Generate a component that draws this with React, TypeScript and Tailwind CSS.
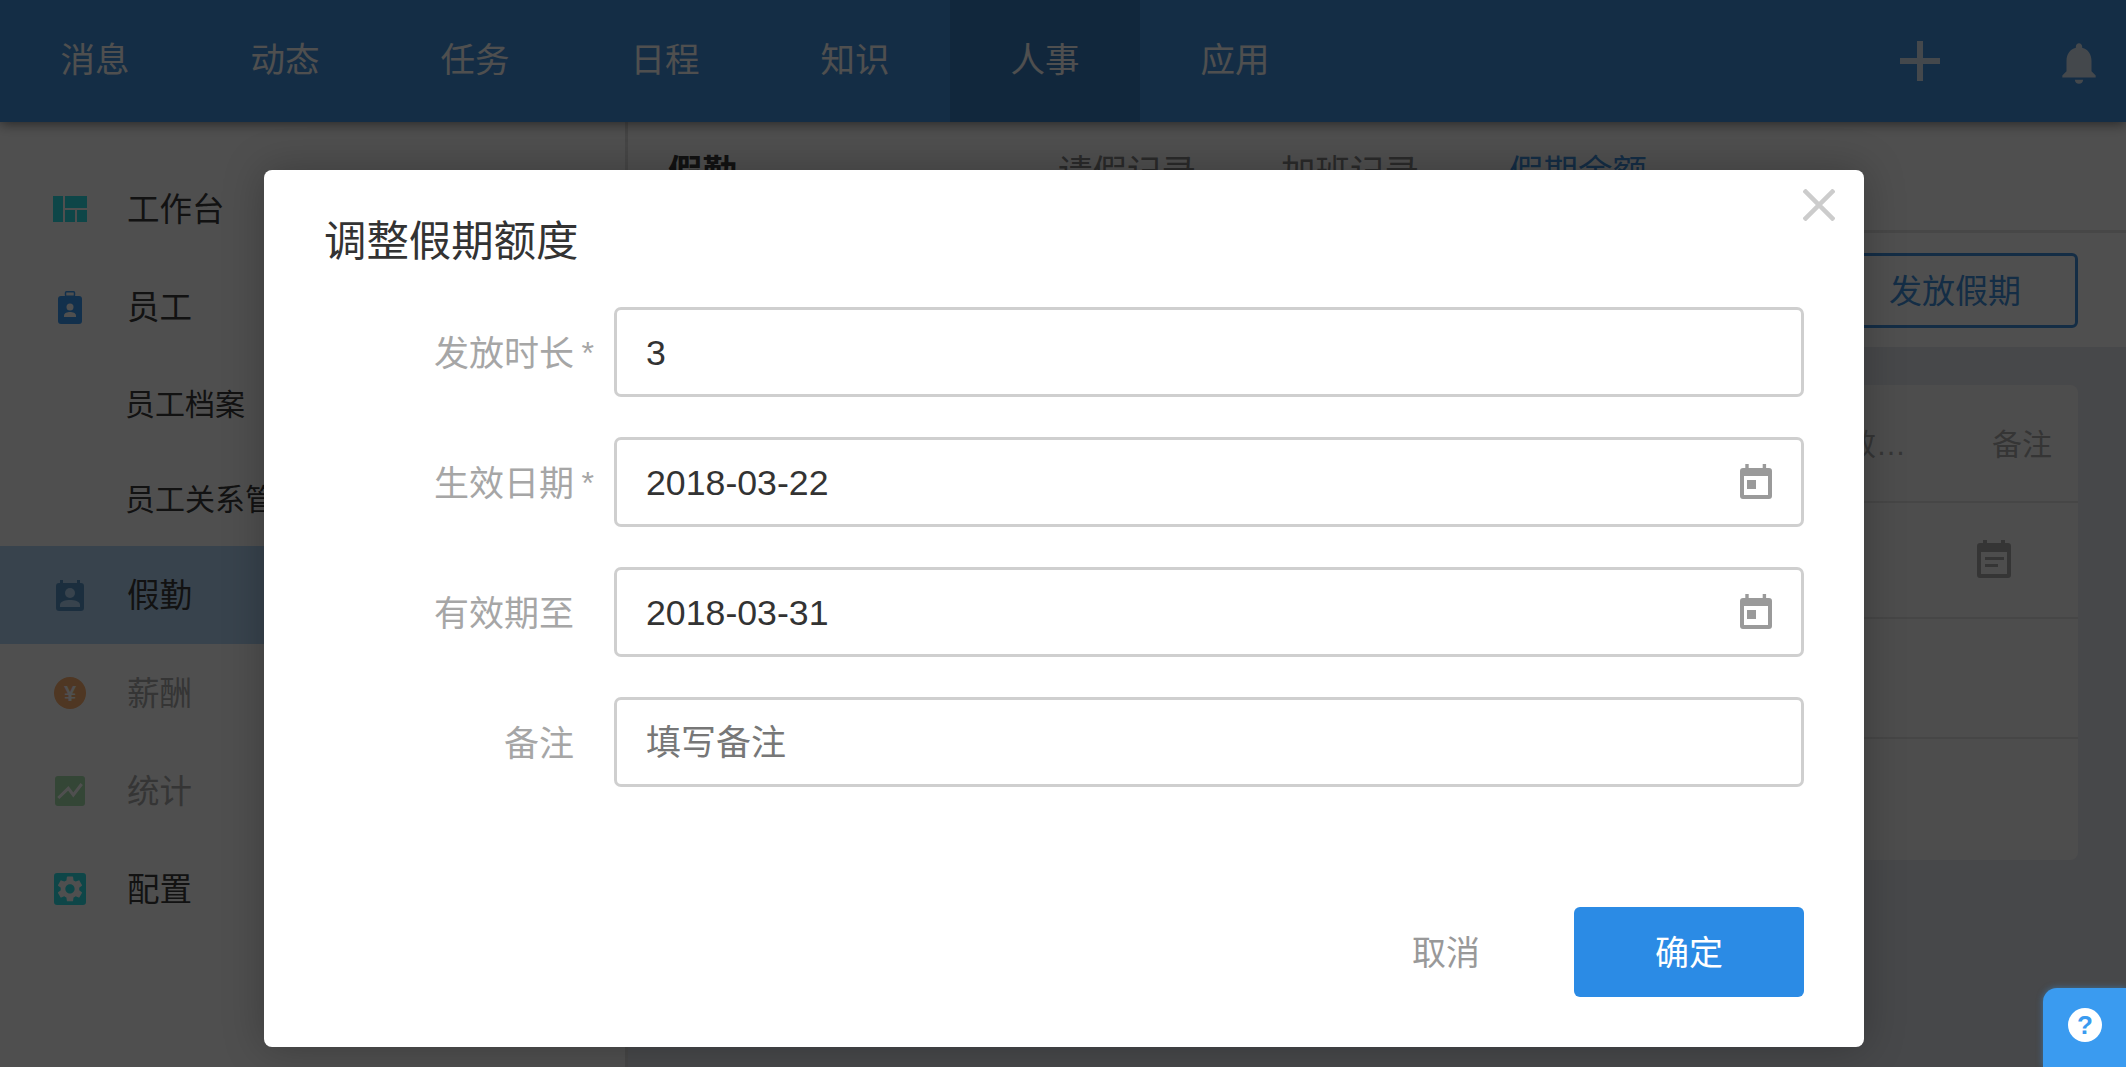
const cjk = "font-['Liberation_Sans','Noto_Sans_CJK_SC',sans-serif]";

const navItems = ["消息", "动态", "任务", "日程", "知识", "人事", "应用"];

function DashIcon() {
    return (
        <svg viewBox="0 0 34 26" className="w-[34px] h-[26px]" fill="#2ee3e8">
            <rect x="0" y="0" width="10" height="26" />
            <rect x="12" y="0" width="22" height="12" />
            <rect x="12" y="14" width="10" height="12" />
            <rect x="24" y="14" width="10" height="12" />
        </svg>
    );
}

function BadgeIcon() {
    return (
        <svg viewBox="0 0 24 33" className="w-[24px] h-[33px]">
            <rect x="7.5" y="0.8" width="9" height="4.4" rx="1" fill="none" stroke="#3b9bf5" strokeWidth="1.5" />
            <rect x="0" y="5" width="24" height="28" rx="3" fill="#3b9bf5" />
            <circle cx="12" cy="16" r="3.5" fill="#fff" />
            <path d="M6 26v-1.5c0-2.5 3.5-3.5 6-3.5s6 1 6 3.5V26z" fill="#fff" />
        </svg>
    );
}

function LeaveIcon() {
    return (
        <svg viewBox="0 0 28 31" className="w-[28px] h-[31px]">
            <rect x="4" y="0" width="3" height="6" fill="#5896c8" />
            <rect x="21" y="0" width="3" height="6" fill="#5896c8" />
            <rect x="0" y="3" width="28" height="28" rx="3" fill="#5896c8" />
            <circle cx="14" cy="13" r="5" fill="#b4d8f8" />
            <path d="M4 27v-2c0-4 6-5 10-5s10 1 10 5v2z" fill="#b4d8f8" />
        </svg>
    );
}

function SalaryIcon() {
    return (
        <div className="w-[32px] h-[32px] rounded-full bg-[#ffb070] flex items-center justify-center text-[22px] font-bold text-white font-['Liberation_Sans',sans-serif]">
            ¥
        </div>
    );
}

function StatsIcon() {
    return (
        <svg viewBox="0 0 30 30" className="w-[30px] h-[30px]">
            <rect x="0" y="0" width="30" height="30" rx="3" fill="#a8e0ae" />
            <path d="M3.3 22l10-9.700 5 6.700 8.400-11" fill="none" stroke="#fff" strokeWidth="3" />
        </svg>
    );
}

function ConfigIcon() {
    return (
        <svg viewBox="0 0 32 32" className="w-[32px] h-[32px]">
            <rect x="0" y="0" width="32" height="32" rx="3" fill="#2ee3e8" />
            <g transform="translate(0.5 0.5) scale(1.29)">
                <path
                    d="M19.14 12.94c.04-.3.06-.61.06-.94 0-.32-.02-.64-.07-.94l2.03-1.58c.18-.14.23-.41.12-.61l-1.92-3.32c-.12-.22-.37-.29-.59-.22l-2.39.96c-.5-.38-1.03-.7-1.62-.94l-.36-2.54c-.04-.24-.24-.41-.48-.41h-3.84c-.24 0-.43.17-.47.41l-.36 2.54c-.59.24-1.13.57-1.62.94l-2.39-.96c-.22-.08-.47 0-.59.22L2.74 8.87c-.12.21-.08.47.12.61l2.03 1.58c-.05.3-.09.63-.09.94s.02.64.07.94l-2.03 1.58c-.18.14-.23.41-.12.61l1.92 3.32c.12.22.37.29.59.22l2.39-.96c.5.38 1.03.7 1.62.94l.36 2.54c.05.24.24.41.48.41h3.84c.24 0 .44-.17.47-.41l.36-2.54c.59-.24 1.13-.56 1.62-.94l2.39.96c.22.08.47 0 .59-.22l1.92-3.32c.12-.22.07-.47-.12-.61l-2.01-1.58zM12 15.6c-1.98 0-3.6-1.62-3.6-3.6s1.62-3.6 3.6-3.6 3.6 1.62 3.6 3.6-1.62 3.6-3.6 3.6z"
                    fill="#fff"
                />
            </g>
        </svg>
    );
}

function CalendarIcon() {
    return (
        <svg viewBox="0 0 32 35" className="w-[32px] h-[35px] absolute right-[29px] top-[24px]">
            <rect x="5.300" y="0" width="3.400" height="6" fill="#9a9a9a" />
            <rect x="22.700" y="0" width="3.400" height="6" fill="#9a9a9a" />
            <path
                fillRule="evenodd"
                d="M3 4h26a3 3 0 0 1 3 3v25a3 3 0 0 1-3 3H3a3 3 0 0 1-3-3V7a3 3 0 0 1 3-3zM4 12v19h24V12z"
                fill="#9a9a9a"
            />
            <rect x="7" y="16" width="9" height="9" fill="#9a9a9a" />
        </svg>
    );
}

function NoteIcon() {
    return (
        <svg viewBox="0 0 34 38" className="w-[34px] h-[38px]">
            <rect x="6" y="0" width="4" height="6" fill="#aaa" />
            <rect x="24" y="0" width="4" height="6" fill="#aaa" />
            <path
                fillRule="evenodd"
                d="M3 3h28a3 3 0 0 1 3 3v29a3 3 0 0 1-3 3H3a3 3 0 0 1-3-3V6a3 3 0 0 1 3-3zM4 12v22h26V12z"
                fill="#aaa"
            />
            <rect x="8" y="17" width="19" height="3" fill="#aaa" />
            <rect x="8" y="24" width="13" height="3" fill="#aaa" />
        </svg>
    );
}

const sideItems = [
    { label: "工作台", icon: <DashIcon />, text: "text-[#3a3a3a]" },
    { label: "员工", icon: <BadgeIcon />, text: "text-[#3a3a3a]" },
    { label: "员工档案", icon: null, text: "text-[#3a3a3a]", sub: true },
    { label: "员工关系管理", icon: null, text: "text-[#3a3a3a]", sub: true },
    { label: "假勤", icon: <LeaveIcon />, text: "text-[#3a3a3a]", active: true },
    { label: "薪酬", icon: <SalaryIcon />, text: "text-[#aaa]" },
    { label: "统计", icon: <StatsIcon />, text: "text-[#aaa]" },
    { label: "配置", icon: <ConfigIcon />, text: "text-[#3a3a3a]" },
];

function Field({
    label,
    required,
    value,
    placeholder,
    date,
}: {
    label: string;
    required?: boolean;
    value?: string;
    placeholder?: string;
    date?: boolean;
}) {
    return (
        <div className="flex items-center h-[90px] mb-[40px]">
            <div className="w-[290px] pr-[40px] pt-[4px] text-right text-[35px] text-[#a6a6a6] relative">
                {label}
                {required && <span className="absolute right-[20px] top-[5px] text-[32px]">*</span>}
            </div>
            <div className="relative flex-1 h-[90px] border-[3px] border-[#cfcfcf] rounded-[7px] flex items-center pl-[29px] pt-[3px] text-[35.7px]">
                {value ? (
                    <span className="text-[#333]">{value}</span>
                ) : (
                    <span className="text-[#777] text-[35px]">{placeholder}</span>
                )}
                {date && <CalendarIcon />}
            </div>
        </div>
    );
}

export default function App() {
    return (
        <div className={`relative w-[2126px] h-[1067px] overflow-hidden bg-[#e5e8ef] ${cjk}`}>
            {/* header */}
            <div className="relative z-10 h-[122px] bg-[#4191de] flex shadow-[0_2px_12px_rgba(0,0,0,0.5)]">
                {navItems.map((n) => (
                    <div
                        key={n}
                        className={`w-[190px] h-full flex items-center justify-center text-[34.5px] text-white ${
                            n === "人事" ? "bg-[#377ec2]" : ""
                        }`}
                    >
                        {n}
                    </div>
                ))}
                <div className="ml-auto flex items-center">
                    <svg viewBox="0 0 40 40" className="w-[40px] h-[40px] mr-[114px]" fill="#dbe8f5">
                        <rect x="17" y="0" width="6" height="40" />
                        <rect x="0" y="17" width="40" height="6" />
                    </svg>
                    <svg viewBox="0 0 24 24" className="w-[50px] h-[50px] mr-[22px] mt-[3px]" fill="#dbe8f5">
                        <path d="M12 22c1.1 0 2-.9 2-2h-4c0 1.100.89 2 2 2zm6-6v-5c0-3.070-1.640-5.640-4.500-6.320V4c0-.83-.67-1.500-1.500-1.500s-1.500.67-1.500 1.500v.68C7.630 5.360 6 7.920 6 11v5l-2 2v1h16v-1l-2-2z" />
                    </svg>
                </div>
            </div>

            <div className="flex h-[945px]">
                {/* sidebar */}
                <aside className="w-[628px] h-full bg-white border-r-[3px] border-[#e0e0e0] pt-[38px] shrink-0">
                    {sideItems.map((s) => (
                        <div
                            key={s.label}
                            className={`flex items-center whitespace-nowrap ${s.sub ? "h-[95px]" : "h-[98px]"} ${
                                s.active ? "bg-[#b4d8f8]" : ""
                            }`}
                        >
                            <div className="w-[128px] pl-[12px] flex justify-center shrink-0">{s.icon}</div>
                            <span className={`${s.text} pt-[2px] ${s.sub ? "text-[30px] -ml-[3px]" : "text-[32.5px] -ml-[1px]"}`}>
                                {s.label}
                            </span>
                        </div>
                    ))}
                </aside>

                {/* content */}
                <main className="flex-1 h-full">
                    <div className="h-[111px] bg-white border-b-[3px] border-[#e4e4e4] flex items-center pl-[40px] pb-[6px] text-[34.5px]">
                        <span className="font-bold text-[#3a3a3a] w-[390px]">假勤</span>
                        <span className="text-[#888] w-[223px]">请假记录</span>
                        <span className="text-[#888] w-[228px]">加班记录</span>
                        <span className="text-[#4191de]">假期余额</span>
                    </div>
                    <div className="h-[114px] bg-white flex items-center justify-end pr-[48px]">
                        <button className="w-[246px] h-[75px] border-[3px] border-[#4191de] rounded-[6px] pt-[3px] text-[33px] text-[#4191de]">
                            发放假期
                        </button>
                    </div>
                    <div className="pt-[38px] pr-[48px]">
                        <div className="bg-[#f9f9f9] rounded-[8px] h-[475px] flex flex-col">
                            <div className="h-[118px] shrink-0 border-b-[2px] border-[#e0e0e0] flex items-center justify-end pr-[26px] pt-[2px] text-[30px] text-[#aaa] gap-[86px]">
                                <span>有效…</span>
                                <span>备注</span>
                            </div>
                            <div className="h-[116px] shrink-0 border-b-[2px] border-[#e0e0e0] flex items-center justify-end pr-[67px] pb-[3px]">
                                <NoteIcon />
                            </div>
                            <div className="h-[120px] shrink-0 border-b-[2px] border-[#e0e0e0]" />
                            <div className="flex-1" />
                        </div>
                    </div>
                </main>
            </div>

            {/* overlay */}
            <div className="absolute inset-0 z-20 bg-black/69" />

            {/* modal */}
            <div className="absolute z-30 left-[264px] top-[170px] w-[1600px] h-[877px] bg-white rounded-[8px] px-[60px] shadow-[0_0_40px_rgba(0,0,0,0.25)]">
                <button className="absolute right-[29px] top-[19px]">
                    <svg viewBox="0 0 32 32" className="w-[32px] h-[32px]" stroke="#cccccc" strokeWidth="4.500">
                        <path d="M1 1l30 30M31 1L1 31" />
                    </svg>
                </button>
                <h2 className="text-[42.4px] text-[#333] leading-[60px] mt-[42px] h-[95px] font-normal">调整假期额度</h2>
                <Field label="发放时长" required value="3" />
                <Field label="生效日期" required value="2018-03-22" date />
                <Field label="有效期至" value="2018-03-31" date />
                <Field label="备注" placeholder="填写备注" />
                <div className="flex justify-end items-center mt-[120px]">
                    <span className="text-[34px] text-[#999] mr-[94px] pt-[2px]">取消</span>
                    <button className="w-[230px] h-[90px] rounded-[6px] bg-[#2b8be5] text-white text-[34px] pt-[2px]">确定</button>
                </div>
            </div>

            {/* help */}
            <div className="absolute z-30 right-0 bottom-0 w-[83px] h-[79px] bg-[#3a9bf0] rounded-tl-[14px] flex justify-center pt-[20px] pl-[1px] shadow-[0_0_6px_rgba(58,155,240,0.5)]">
                <div className="w-[34px] h-[34px] rounded-full bg-white text-[#3a9bf0] text-[26px] font-bold flex items-center justify-center leading-none">
                    ?
                </div>
            </div>
        </div>
    );
}
